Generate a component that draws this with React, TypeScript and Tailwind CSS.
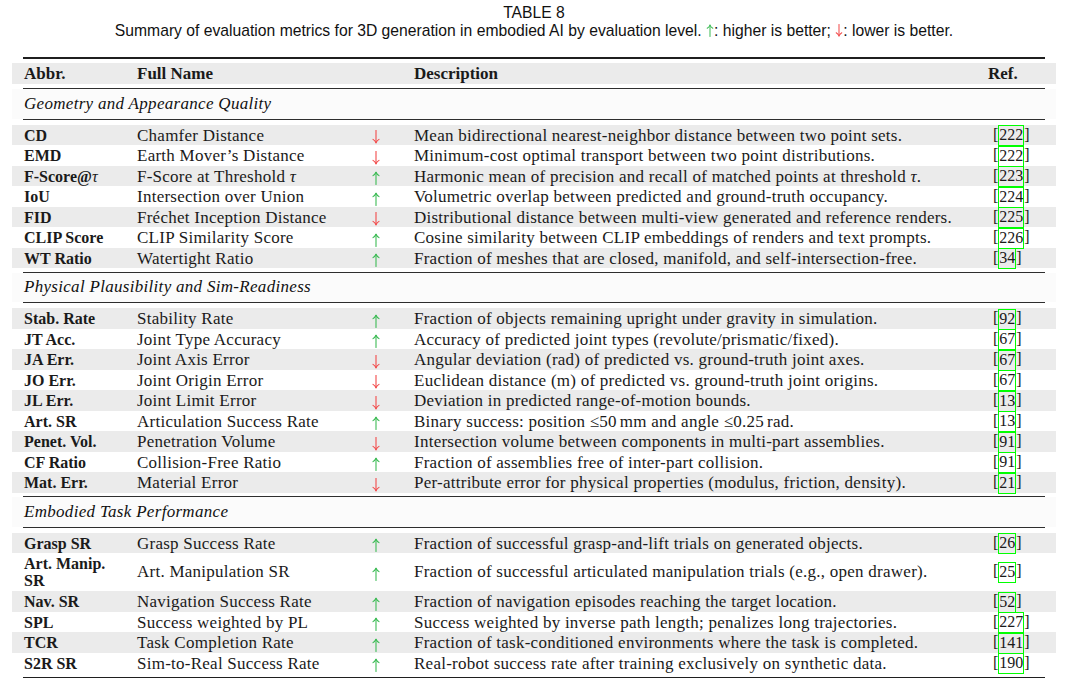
import type { ReactNode } from "react";

type Dir = "up" | "down";
type Metric = { abbr: ReactNode; name: ReactNode; dir: Dir; desc: ReactNode; ref: string; tall?: boolean };

const Tau = () => <i>τ</i>;

const sections: { title: string; rows: Metric[] }[] = [
  {
    title: "Geometry and Appearance Quality",
    rows: [
      { abbr: "CD", name: "Chamfer Distance", dir: "down", desc: "Mean bidirectional nearest-neighbor distance between two point sets.", ref: "222" },
      { abbr: "EMD", name: "Earth Mover’s Distance", dir: "down", desc: "Minimum-cost optimal transport between two point distributions.", ref: "222" },
      {
        abbr: <>F-Score@<span className="font-normal"><Tau /></span></>,
        name: <>F-Score at Threshold <Tau /></>,
        dir: "up",
        desc: <>Harmonic mean of precision and recall of matched points at threshold <Tau />.</>,
        ref: "223",
      },
      { abbr: "IoU", name: "Intersection over Union", dir: "up", desc: "Volumetric overlap between predicted and ground-truth occupancy.", ref: "224" },
      { abbr: "FID", name: "Fréchet Inception Distance", dir: "down", desc: "Distributional distance between multi-view generated and reference renders.", ref: "225" },
      { abbr: "CLIP Score", name: "CLIP Similarity Score", dir: "up", desc: "Cosine similarity between CLIP embeddings of renders and text prompts.", ref: "226" },
      { abbr: "WT Ratio", name: "Watertight Ratio", dir: "up", desc: "Fraction of meshes that are closed, manifold, and self-intersection-free.", ref: "34" },
    ],
  },
  {
    title: "Physical Plausibility and Sim-Readiness",
    rows: [
      { abbr: "Stab. Rate", name: "Stability Rate", dir: "up", desc: "Fraction of objects remaining upright under gravity in simulation.", ref: "92" },
      { abbr: "JT Acc.", name: "Joint Type Accuracy", dir: "up", desc: "Accuracy of predicted joint types (revolute/prismatic/fixed).", ref: "67" },
      { abbr: "JA Err.", name: "Joint Axis Error", dir: "down", desc: "Angular deviation (rad) of predicted vs. ground-truth joint axes.", ref: "67" },
      { abbr: "JO Err.", name: "Joint Origin Error", dir: "down", desc: "Euclidean distance (m) of predicted vs. ground-truth joint origins.", ref: "67" },
      { abbr: "JL Err.", name: "Joint Limit Error", dir: "down", desc: "Deviation in predicted range-of-motion bounds.", ref: "13" },
      {
        abbr: "Art. SR",
        name: "Articulation Success Rate",
        dir: "up",
        desc: <>Binary success: position ≤50<span className="ml-[3px]">mm</span> and angle ≤0.25<span className="ml-[3px]">rad</span>.</>,
        ref: "13",
      },
      { abbr: "Penet. Vol.", name: "Penetration Volume", dir: "down", desc: "Intersection volume between components in multi-part assemblies.", ref: "91" },
      { abbr: "CF Ratio", name: "Collision-Free Ratio", dir: "up", desc: "Fraction of assemblies free of inter-part collision.", ref: "91" },
      { abbr: "Mat. Err.", name: "Material Error", dir: "down", desc: "Per-attribute error for physical properties (modulus, friction, density).", ref: "21" },
    ],
  },
  {
    title: "Embodied Task Performance",
    rows: [
      { abbr: "Grasp SR", name: "Grasp Success Rate", dir: "up", desc: "Fraction of successful grasp-and-lift trials on generated objects.", ref: "26" },
      { abbr: <>Art. Manip.<br />SR</>, name: "Art. Manipulation SR", dir: "up", desc: "Fraction of successful articulated manipulation trials (e.g., open drawer).", ref: "25", tall: true },
      { abbr: "Nav. SR", name: "Navigation Success Rate", dir: "up", desc: "Fraction of navigation episodes reaching the target location.", ref: "52" },
      { abbr: "SPL", name: "Success weighted by PL", dir: "up", desc: "Success weighted by inverse path length; penalizes long trajectories.", ref: "227" },
      { abbr: "TCR", name: "Task Completion Rate", dir: "up", desc: "Fraction of task-conditioned environments where the task is completed.", ref: "141" },
      { abbr: "S2R SR", name: "Sim-to-Real Success Rate", dir: "up", desc: "Real-robot success rate after training exclusively on synthetic data.", ref: "190" },
    ],
  },
];

function Arrow({ dir, className = "" }: { dir: Dir; className?: string }) {
  const up = dir === "up";
  return (
    <svg viewBox="0 0 8 14" className={className} fill="none" stroke={up ? "#3dbb55" : "#f24a4a"} strokeWidth={1.1} strokeLinecap="round" strokeLinejoin="round">
      {up ? (
        <>
          <path d="M4 13.5V1.2" />
          <path d="M1 4.6Q3 3.4 4 1.2Q5 3.4 7 4.6" />
        </>
      ) : (
        <>
          <path d="M4 0.5v12.3" />
          <path d="M1 9.4Q3 10.6 4 12.8Q5 10.6 7 9.4" />
        </>
      )}
    </svg>
  );
}

function Rule({ thick = false }: { thick?: boolean }) {
  return <div className={`mx-[11px] ${thick ? "h-[1.6px] bg-[#1f1f1f]" : "h-px bg-[#2e2e2e]"}`} />;
}

function Row({ m, shaded }: { m: Metric; shaded: boolean }) {
  return (
    <div
      className={`grid grid-cols-[113px_219px_58px_572px_1fr] items-center pl-[12px] ${m.tall ? "h-[38px]" : "h-[20.5px]"} ${
        shaded ? "bg-[#ebebeb]" : "bg-white"
      }`}
    >
      <div className={`text-[16px] font-bold tracking-normal ${m.tall ? "leading-[17px]" : ""}`}>{m.abbr}</div>
      <div>{m.name}</div>
      <div className="pl-[16px] pt-[3px]">
        <Arrow dir={m.dir} className="h-[14px] w-[8px]" />
      </div>
      <div className="whitespace-nowrap">{m.desc}</div>
      <div className="pl-[7px] whitespace-nowrap text-[16px] tracking-normal">
        [<span className="inline-block h-[21px] border-[1.5px] border-[#00ff00] align-middle leading-[18px]">{m.ref}</span>]
      </div>
    </div>
  );
}

export default function App() {
  return (
    <div className="w-[1080px] h-[681px] overflow-hidden bg-white text-[#1a1a1a]">
      <div className="ml-[12px] w-[1044px] pt-[4px]">
        <div className="text-center font-['Liberation_Sans',Arial,sans-serif] text-[15.7px] leading-[18px] text-[#111]">
          <div>TABLE 8</div>
          <div>
            Summary of evaluation metrics for 3D generation in embodied AI by evaluation level.{" "}
            <Arrow dir="up" className="inline-block h-[13px] w-[8px] -mt-[3px]" />: higher is better;{" "}
            <Arrow dir="down" className="inline-block h-[13px] w-[8px] -mt-[3px]" />: lower is better.
          </div>
        </div>

        <div className="mt-[17px] font-['Liberation_Serif','Times_New_Roman',serif] text-[17px] tracking-[0.25px] leading-[20px]">
          <Rule thick />
          <div className="h-[4.5px]" />
          <div className="grid grid-cols-[113px_219px_58px_572px_1fr] items-center pl-[12px] h-[21px] bg-[#ebebeb] font-bold tracking-normal">
            <div>Abbr.</div>
            <div>Full Name</div>
            <div />
            <div>Description</div>
            <div className="pl-[2px]">Ref.</div>
          </div>
          <div className="h-[4px]" />
          {sections.map((s) => (
            <div key={s.title}>
              <Rule />
              <div className="flex h-[29.5px] items-center bg-[#fbfbfb] pl-[12px] italic tracking-[0.3px] text-[#111]">{s.title}</div>
              <Rule />
              <div className="h-[5px]" />
              {s.rows.map((m, i) => (
                <Row key={i} m={m} shaded={i % 2 === 0} />
              ))}
              <div className="h-[3.5px]" />
            </div>
          ))}
          <Rule thick />
        </div>
      </div>
    </div>
  );
}
